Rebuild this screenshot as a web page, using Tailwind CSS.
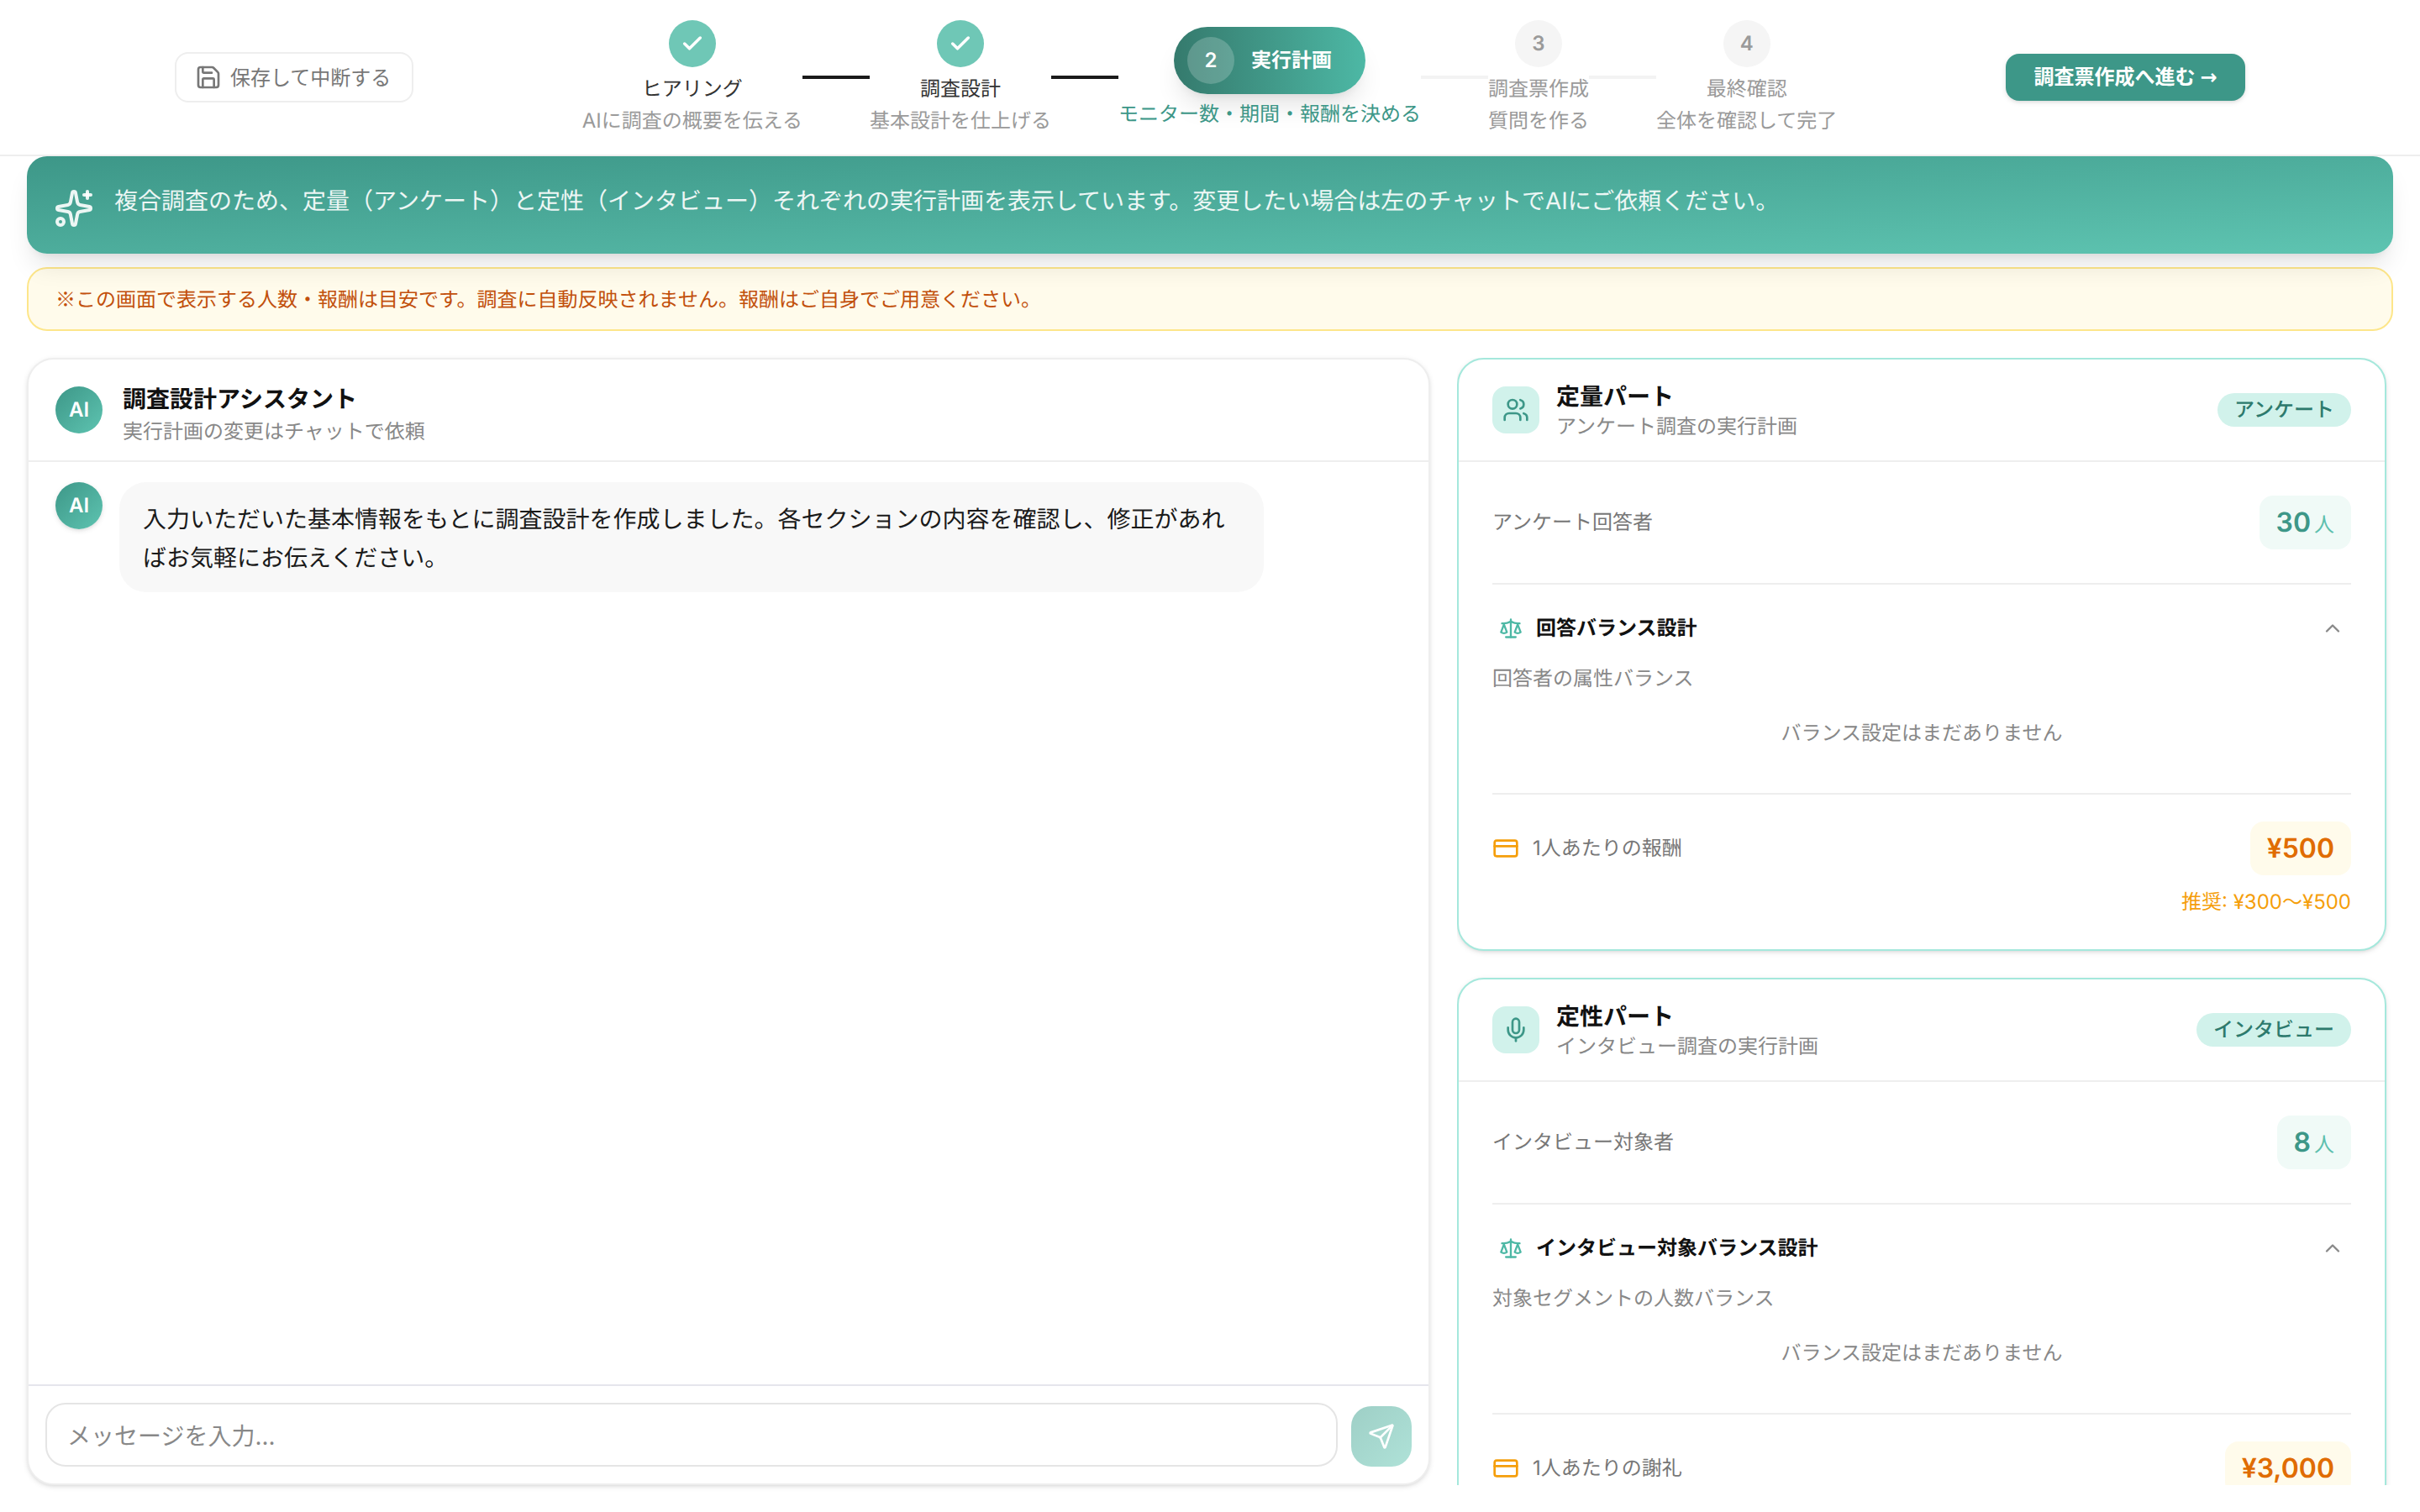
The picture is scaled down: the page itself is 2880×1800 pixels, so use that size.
<!DOCTYPE html>
<html lang="ja">
<head>
    <meta charset="UTF-8">
    <title>実行計画</title>
    <script src="https://cdn.jsdelivr.net/npm/@tailwindcss/browser@4"></script>
</head>
<body class="[zoom:2] bg-white">
<div class="flex h-[900px] flex-col overflow-hidden bg-white font-['Inter','Noto_Sans_CJK_JP',sans-serif] text-xs text-[#1a1a1a] [text-rendering:geometricPrecision]">

    <!-- Header / stepper -->
    <header class="flex h-[93px] shrink-0 items-center justify-between border-b border-[#eeeeee] px-[104px]">
        <button class="flex h-[30px] w-[142px] items-center gap-[5px] rounded-lg border border-[#eeeeee] px-[11px] text-[#777777]">
            <svg class="h-4 w-4 shrink-0" viewBox="0 0 24 24" fill="none" stroke="currentColor" stroke-width="2" stroke-linecap="round" stroke-linejoin="round"><path d="M15.2 3a2 2 0 0 1 1.4.6l3.8 3.8a2 2 0 0 1 .6 1.4V19a2 2 0 0 1-2 2H5a2 2 0 0 1-2-2V5a2 2 0 0 1 2-2z"/><path d="M17 21v-7a1 1 0 0 0-1-1H8a1 1 0 0 0-1 1v7"/><path d="M7 3v4a1 1 0 0 0 1 1h7"/></svg>
            <span class="whitespace-nowrap pt-[1px]">保存して中断する</span>
        </button>

        <nav class="flex items-center">
            <div class="flex flex-col items-center">
                <div class="flex h-7 w-7 items-center justify-center rounded-full bg-[#6fc7b6] text-white">
                    <svg class="h-3.5 w-3.5" viewBox="0 0 24 24" fill="none" stroke="currentColor" stroke-width="3" stroke-linecap="round" stroke-linejoin="round"><path d="M20 6 9 17l-5-5"/></svg>
                </div>
                <div class="mt-[5px] leading-4 text-[#333333]">ヒアリング</div>
                <div class="mt-[3px] whitespace-nowrap leading-4 text-[#9a9a9a]">AIに調査の概要を伝える</div>
            </div>
            <div class="h-0.5 w-10 bg-[#1a1a1a]"></div>
            <div class="flex flex-col items-center">
                <div class="flex h-7 w-7 items-center justify-center rounded-full bg-[#6fc7b6] text-white">
                    <svg class="h-3.5 w-3.5" viewBox="0 0 24 24" fill="none" stroke="currentColor" stroke-width="3" stroke-linecap="round" stroke-linejoin="round"><path d="M20 6 9 17l-5-5"/></svg>
                </div>
                <div class="mt-[5px] leading-4 text-[#333333]">調査設計</div>
                <div class="mt-[3px] whitespace-nowrap leading-4 text-[#9a9a9a]">基本設計を仕上げる</div>
            </div>
            <div class="h-0.5 w-10 bg-[#1a1a1a]"></div>
            <div class="flex flex-col items-center">
                <div class="flex h-10 items-center gap-2.5 rounded-full bg-linear-to-r from-[#357a6d] to-[#4db8a5] pl-2 pr-5 shadow-lg">
                    <div class="flex h-7 w-7 items-center justify-center rounded-full bg-white/20 font-semibold text-white">2</div>
                    <span class="whitespace-nowrap font-semibold text-white">実行計画</span>
                </div>
                <div class="mt-1 whitespace-nowrap leading-4 text-[#3d9788]">モニター数・期間・報酬を決める</div>
            </div>
            <div class="h-0.5 w-10 bg-[#f3f3f3]"></div>
            <div class="flex flex-col items-center">
                <div class="flex h-7 w-7 items-center justify-center rounded-full bg-[#f5f5f5] font-semibold text-[#9a9a9a]">3</div>
                <div class="mt-[5px] whitespace-nowrap leading-4 text-[#9a9a9a]">調査票作成</div>
                <div class="mt-[3px] whitespace-nowrap leading-4 text-[#9a9a9a]">質問を作る</div>
            </div>
            <div class="h-0.5 w-10 bg-[#f3f3f3]"></div>
            <div class="flex flex-col items-center">
                <div class="flex h-7 w-7 items-center justify-center rounded-full bg-[#f5f5f5] font-semibold text-[#9a9a9a]">4</div>
                <div class="mt-[5px] whitespace-nowrap leading-4 text-[#9a9a9a]">最終確認</div>
                <div class="mt-[3px] whitespace-nowrap leading-4 text-[#9a9a9a]">全体を確認して完了</div>
            </div>
        </nav>

        <button class="h-7 w-[142.5px] whitespace-nowrap rounded-lg bg-[#3d9788] text-center font-semibold leading-4 text-white shadow-sm">調査票作成へ進む <span class="font-['DejaVu_Sans']">→</span></button>
    </header>

    <!-- Banner -->
    <div class="relative z-10 mx-4 flex h-[58px] shrink-0 items-start gap-3 rounded-xl bg-linear-to-br from-[#3d9788] to-[#5ec4b1] px-4 pt-4 text-white/90 shadow-lg">
        <svg class="mt-[3px] h-6 w-6 shrink-0" viewBox="0 0 24 24" fill="none" stroke="currentColor" stroke-width="2" stroke-linecap="round" stroke-linejoin="round"><path d="M11.017 2.814a1 1 0 0 1 1.966 0l1.051 5.558a2 2 0 0 0 1.594 1.594l5.558 1.051a1 1 0 0 1 0 1.966l-5.558 1.051a2 2 0 0 0-1.594 1.594l-1.051 5.558a1 1 0 0 1-1.966 0l-1.051-5.558a2 2 0 0 0-1.594-1.594l-5.558-1.051a1 1 0 0 1 0-1.966l5.558-1.051a2 2 0 0 0 1.594-1.594z"/><path d="M20 2v4"/><path d="M22 4h-4"/><circle cx="4" cy="20" r="2"/></svg>
        <p class="text-sm leading-[21px]">複合調査のため、定量（アンケート）と定性（インタビュー）それぞれの実行計画を表示しています。変更したい場合は左のチャットでAIにご依頼ください。</p>
    </div>

    <!-- Notice -->
    <div class="mx-4 mt-2 flex h-[38px] shrink-0 items-center rounded-xl border border-[#fde68a] bg-[#fffbeb] px-4 text-[#c2500c]"><p class="leading-4"><span class="font-['Noto_Sans_CJK_JP']">※</span>この画面で表示する人数・報酬は目安です。調査に自動反映されません。報酬はご自身でご用意ください。</p></div>

    <main class="flex min-h-0 flex-1 gap-4 p-4">

        <!-- Chat -->
        <section class="flex w-[835px] shrink-0 flex-col rounded-2xl border border-[#eeeeee] bg-white shadow-sm">
            <div class="flex h-[61px] shrink-0 items-center gap-3 border-b border-[#eeeeee] px-4">
                <div class="flex h-7 w-7 items-center justify-center rounded-full bg-linear-to-br from-[#3d9788] to-[#5ec4b1] font-semibold text-white">AI</div>
                <div class="pt-1">
                    <div class="text-sm font-semibold leading-5 text-[#111111]">調査設計アシスタント</div>
                    <div class="mt-[1.5px] leading-4 text-[#888888]">実行計画の変更はチャットで依頼</div>
                </div>
            </div>
            <div class="flex min-h-0 flex-1 items-start gap-2.5 px-4 py-3">
                <div class="flex h-7 w-7 shrink-0 items-center justify-center rounded-full bg-linear-to-br from-[#3d9788] to-[#5ec4b1] font-semibold text-white shadow-sm">AI</div>
                <div class="max-w-[85%] rounded-2xl bg-[#f8f8f8] px-3.5 pb-[9px] pt-[11px] text-sm leading-relaxed text-[#1a1a1a]">入力いただいた基本情報をもとに調査設計を作成しました。各セクションの内容を確認し、修正があればお気軽にお伝えください。</div>
            </div>
            <div class="flex shrink-0 items-end gap-2 border-t border-[#e5e5ec] p-2.5">
                <input class="h-[38px] min-w-0 flex-1 rounded-xl border border-[#e5e5e5] px-3 pt-[2px] text-sm placeholder:text-[#888888]" placeholder="メッセージを入力...">
                <button class="flex h-9 w-9 shrink-0 items-center justify-center rounded-xl bg-linear-to-br from-[#9ecfc6] to-[#afe2d8] text-white">
                    <svg class="h-4 w-4" viewBox="0 0 24 24" fill="none" stroke="currentColor" stroke-width="2" stroke-linecap="round" stroke-linejoin="round"><path d="M14.536 21.686a.5.5 0 0 0 .937-.024l6.5-19a.496.496 0 0 0-.635-.635l-19 6.5a.5.5 0 0 0-.024.937l7.93 3.18a2 2 0 0 1 1.112 1.11z"/><path d="m21.854 2.147-10.94 10.939"/></svg>
                </button>
            </div>
        </section>

        <!-- Plans -->
        <div class="min-h-0 min-w-0 flex-1 overflow-hidden pr-1">

            <section class="mb-4 rounded-2xl border border-[#a5e8dc] bg-white shadow-sm">
                <div class="flex h-[61px] items-center gap-2.5 border-b border-[#eeeeee] px-5">
                    <div class="flex h-7 w-7 items-center justify-center rounded-lg bg-[#d1f2eb] text-[#3d9788]">
                        <svg class="h-4 w-4" viewBox="0 0 24 24" fill="none" stroke="currentColor" stroke-width="2" stroke-linecap="round" stroke-linejoin="round"><path d="M16 21v-2a4 4 0 0 0-4-4H6a4 4 0 0 0-4 4v2"/><circle cx="9" cy="7" r="4"/><path d="M22 21v-2a4 4 0 0 0-3-3.87"/><path d="M16 3.13a4 4 0 0 1 0 7.75"/></svg>
                    </div>
                    <div class="flex-1">
                        <div class="text-sm font-semibold leading-5 text-[#111111]">定量パート</div>
                        <div class="leading-4 text-[#888888]">アンケート調査の実行計画</div>
                    </div>
                    <span class="rounded-full bg-[#d1f2eb] px-2.5 font-medium leading-5 text-[#2d7a6d]">アンケート</span>
                </div>
                <div class="mx-5 flex items-center justify-between border-b border-[#eeeeee] py-5">
                    <span class="text-[#777777]">アンケート回答者</span>
                    <div class="flex items-baseline gap-0.5 rounded-lg bg-[#f0faf7] px-2.5 py-1">
                        <span class="text-base font-semibold text-[#3d9788]">30</span><span class="text-[#5ebfae]">人</span>
                    </div>
                </div>
                <div class="mx-5 border-b border-[#eeeeee] pb-[27.5px] pt-[18px]">
                    <div class="flex items-center justify-between px-1">
                        <div class="flex items-center gap-2">
                            <svg class="h-3.5 w-3.5 text-[#4db8a5]" viewBox="0 0 24 24" fill="none" stroke="currentColor" stroke-width="2" stroke-linecap="round" stroke-linejoin="round"><path d="m16 16 3-8 3 8c-.87.65-1.92 1-3 1s-2.13-.35-3-1Z"/><path d="m2 16 3-8 3 8c-.87.65-1.92 1-3 1s-2.13-.35-3-1Z"/><path d="M7 21h10"/><path d="M12 3v18"/><path d="M3 7h2c2 0 5-1 7-2 2 1 5 2 7 2h2"/></svg>
                            <span class="font-semibold leading-4 text-[#111111]">回答バランス設計</span>
                        </div>
                        <svg class="h-3.5 w-3.5 text-[#888888]" viewBox="0 0 24 24" fill="none" stroke="currentColor" stroke-width="2" stroke-linecap="round" stroke-linejoin="round"><path d="m18 15-6-6-6 6"/></svg>
                    </div>
                    <div class="mt-3.5 leading-4 text-[#888888]">回答者の属性バランス</div>
                    <div class="mt-[16.5px] text-center leading-4 text-[#888888]">バランス設定はまだありません</div>
                </div>
                <div class="mx-5 pb-5 pt-4">
                    <div class="flex items-center justify-between">
                        <div class="flex items-center gap-2 text-[#777777]">
                            <svg class="h-4 w-4 text-[#f59e0b]" viewBox="0 0 24 24" fill="none" stroke="currentColor" stroke-width="2" stroke-linecap="round" stroke-linejoin="round"><rect width="20" height="14" x="2" y="5" rx="2"/><line x1="2" x2="22" y1="10" y2="10"/></svg>
                            <span>1人あたりの報酬</span>
                        </div>
                        <div class="rounded-lg bg-[#fffbeb] px-2.5 py-1 text-base font-semibold text-[#e06c00]">¥500</div>
                    </div>
                    <div class="mt-2 text-right leading-4 text-[#f59e0b]">推奨: ¥300〜¥500</div>
                </div>
            </section>

            <section class="mb-4 rounded-2xl border border-[#a5e8dc] bg-white shadow-sm">
                <div class="flex h-[61px] items-center gap-2.5 border-b border-[#eeeeee] px-5">
                    <div class="flex h-7 w-7 items-center justify-center rounded-lg bg-[#d1f2eb] text-[#3d9788]">
                        <svg class="h-4 w-4" viewBox="0 0 24 24" fill="none" stroke="currentColor" stroke-width="2" stroke-linecap="round" stroke-linejoin="round"><path d="M12 2a3 3 0 0 0-3 3v7a3 3 0 0 0 6 0V5a3 3 0 0 0-3-3Z"/><path d="M19 10v2a7 7 0 0 1-14 0v-2"/><line x1="12" x2="12" y1="19" y2="22"/></svg>
                    </div>
                    <div class="flex-1">
                        <div class="text-sm font-semibold leading-5 text-[#111111]">定性パート</div>
                        <div class="leading-4 text-[#888888]">インタビュー調査の実行計画</div>
                    </div>
                    <span class="rounded-full bg-[#d1f2eb] px-2.5 font-medium leading-5 text-[#2d7a6d]">インタビュー</span>
                </div>
                <div class="mx-5 flex items-center justify-between border-b border-[#eeeeee] py-5">
                    <span class="text-[#777777]">インタビュー対象者</span>
                    <div class="flex items-baseline gap-0.5 rounded-lg bg-[#f0faf7] px-2.5 py-1">
                        <span class="text-base font-semibold text-[#3d9788]">8</span><span class="text-[#5ebfae]">人</span>
                    </div>
                </div>
                <div class="mx-5 border-b border-[#eeeeee] pb-[27.5px] pt-[18px]">
                    <div class="flex items-center justify-between px-1">
                        <div class="flex items-center gap-2">
                            <svg class="h-3.5 w-3.5 text-[#4db8a5]" viewBox="0 0 24 24" fill="none" stroke="currentColor" stroke-width="2" stroke-linecap="round" stroke-linejoin="round"><path d="m16 16 3-8 3 8c-.87.65-1.92 1-3 1s-2.13-.35-3-1Z"/><path d="m2 16 3-8 3 8c-.87.65-1.92 1-3 1s-2.13-.35-3-1Z"/><path d="M7 21h10"/><path d="M12 3v18"/><path d="M3 7h2c2 0 5-1 7-2 2 1 5 2 7 2h2"/></svg>
                            <span class="font-semibold leading-4 text-[#111111]">インタビュー対象バランス設計</span>
                        </div>
                        <svg class="h-3.5 w-3.5 text-[#888888]" viewBox="0 0 24 24" fill="none" stroke="currentColor" stroke-width="2" stroke-linecap="round" stroke-linejoin="round"><path d="m18 15-6-6-6 6"/></svg>
                    </div>
                    <div class="mt-3.5 leading-4 text-[#888888]">対象セグメントの人数バランス</div>
                    <div class="mt-[16.5px] text-center leading-4 text-[#888888]">バランス設定はまだありません</div>
                </div>
                <div class="mx-5 pb-5 pt-4">
                    <div class="flex items-center justify-between">
                        <div class="flex items-center gap-2 text-[#777777]">
                            <svg class="h-4 w-4 text-[#f59e0b]" viewBox="0 0 24 24" fill="none" stroke="currentColor" stroke-width="2" stroke-linecap="round" stroke-linejoin="round"><rect width="20" height="14" x="2" y="5" rx="2"/><line x1="2" x2="22" y1="10" y2="10"/></svg>
                            <span>1人あたりの謝礼</span>
                        </div>
                        <div class="rounded-lg bg-[#fffbeb] px-2.5 py-1 text-base font-semibold text-[#e06c00]">¥3,000</div>
                    </div>
                </div>
            </section>
        </div>
    </main>
</div>
</body>
</html>
